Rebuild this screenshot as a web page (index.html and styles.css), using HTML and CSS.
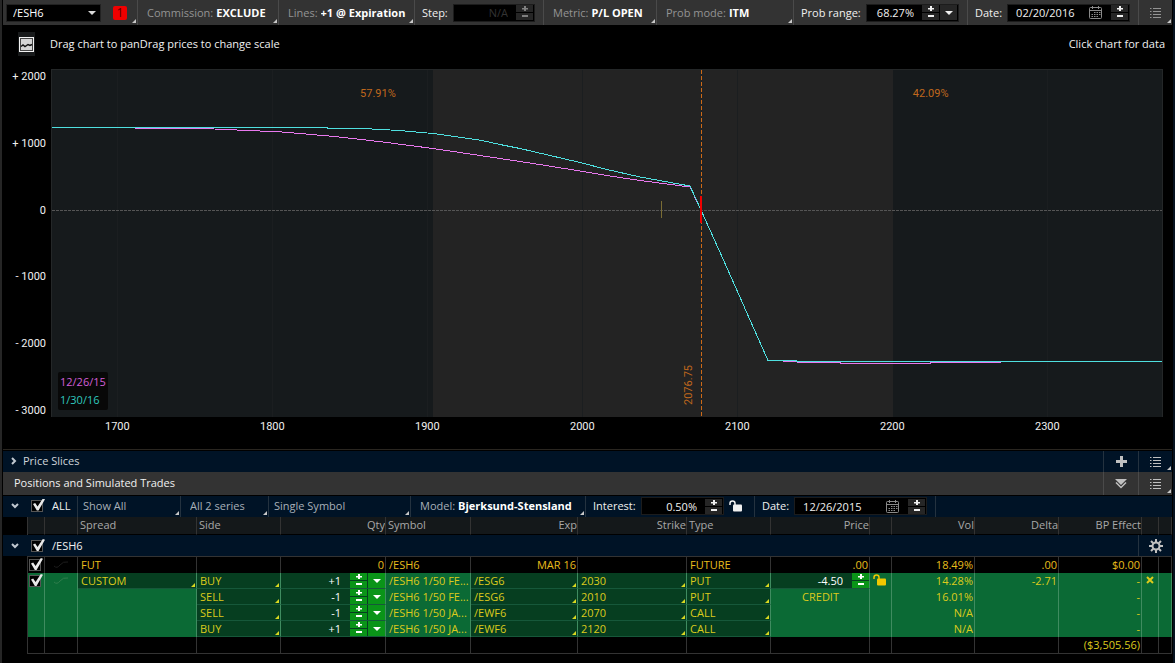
FILE: index.html
```html
<!DOCTYPE html>
<html lang="en">

<head>
    <meta charset="utf-8">
    <meta name="viewport" content="width=device-width, initial-scale=1">
    <title>Risk Profile - /ESH6</title>
    <link rel="stylesheet" href="styles.css">
</head>

<body>
    <svg class="sprite" aria-hidden="true">
        <symbol id="i-plus" viewBox="0 0 6 5"><path d="M2 0h2v5H2zM0 2h6v1.500H0z" /></symbol>
        <symbol id="i-minus" viewBox="0 0 6 5"><path d="M0 1h6v2H0z" /></symbol>
        <symbol id="i-down" viewBox="0 0 8 4"><path d="M0 0h8L4 4z" /></symbol>
        <symbol id="i-list" viewBox="0 0 12 12"><path d="M0 1h1.500v1H0zM3 1h8v1H3zM0 4h1.500v1H0zM3 4h8v1H3zM0 7h1.500v1H0zM3 7h8v1H3zM0 10h1.500v1H0zM3 10h8v1H3z" /></symbol>
        <symbol id="i-calendar" viewBox="0 0 13 13"><path d="M.5 2.500q0-1 1-1h10q1 0 1 1v9q0 1-1 1h-10q-1 0-1-1zM.5 4.500h12M3.500 0v3M9.500 0v3" fill="none" stroke="currentColor" /><path d="M5 6h1.500v1H5zM7.500 6H9v1H7.500zM10 6h1.500v1H10zM2.500 8H4v1H2.500zM5 8h1.500v1H5zM7.500 8H9v1H7.500zM10 8h1.500v1H10zM2.500 10H4v1H2.500zM5 10h1.500v1H5zM7.500 10H9v1H7.500z" /></symbol>
        <symbol id="i-lock" viewBox="0 0 13 12"><path d="M1 5V3.500Q1 1 3.500 1T6 3.500V5" fill="none" stroke="currentColor" stroke-width="1.500" /><rect x="4" y="4.500" width="9" height="7" rx="1" /></symbol>
        <symbol id="i-chevron" viewBox="0 0 8 6"><path d="M1 1l3 3 3-3" fill="none" stroke="currentColor" stroke-width="2" /></symbol>
        <symbol id="i-curve" viewBox="0 0 16 9"><path d="M1 6q3 3 6-1t8-3" fill="none" stroke="currentColor" /></symbol>
        <symbol id="i-close" viewBox="0 0 8 8"><path d="M1 1l6 6M7 1L1 7" fill="none" stroke="currentColor" stroke-width="2" /></symbol>
        <symbol id="i-gear" viewBox="0 0 14 14"><circle cx="7" cy="7" r="3.500" fill="none" stroke="currentColor" stroke-width="2" /><path d="M7 0v3M7 11v3M0 7h3M11 7h3M2 2l2.200 2.200M9.800 9.800L12 12M12 2L9.800 4.200M4.200 9.800L2 12" fill="none" stroke="currentColor" stroke-width="2" /></symbol>
    </svg>

    <header class="toolbar">
        <div class="cell symbol-cell corner">
            <div class="combo">
                <select aria-label="Symbol"><option>/ESH6</option></select>
                <svg class="arrow"><use href="#i-down" /></svg>
            </div>
            <button class="alert" aria-label="Alerts">1</button>
        </div>
        <label class="cell corner">Commission: <select class="value"><option>EXCLUDE</option></select></label>
        <label class="cell corner">Lines: <select class="value"><option>+1 @ Expiration</option></select></label>
        <div class="cell field-cell">
            <label for="step">Step:</label>
            <div class="field disabled">
                <input id="step" type="text" value="N/A" disabled>
                <span class="stepper"><button disabled aria-label="Increase step"><svg><use href="#i-plus" /></svg></button><button disabled aria-label="Decrease step"><svg><use href="#i-minus" /></svg></button></span>
            </div>
        </div>
        <label class="cell corner">Metric: <select class="value"><option>P/L OPEN</option></select></label>
        <label class="cell corner">Prob mode: <select class="value"><option>ITM</option></select></label>
        <div class="cell field-cell">
            <label for="range">Prob range:</label>
            <div class="field">
                <input id="range" type="text" value="68.27%">
                <span class="stepper"><button aria-label="Increase range"><svg><use href="#i-plus" /></svg></button><button aria-label="Decrease range"><svg><use href="#i-minus" /></svg></button></span>
                <button class="drop" aria-label="Range presets"><svg><use href="#i-down" /></svg></button>
            </div>
        </div>
        <div class="cell field-cell">
            <label for="prob-date">Date:</label>
            <div class="field date">
                <input id="prob-date" type="text" value="02/20/2016">
                <button class="calendar" aria-label="Pick date"><svg><use href="#i-calendar" /></svg></button>
                <span class="stepper"><button aria-label="Next day"><svg><use href="#i-plus" /></svg></button><button aria-label="Previous day"><svg><use href="#i-minus" /></svg></button></span>
            </div>
        </div>
        <button class="cell tool corner" aria-label="Menu"><svg class="list"><use href="#i-list" /></svg></button>
    </header>

    <main>
        <section class="chart">
            <div class="hints">
                <svg class="picture" viewBox="0 0 17 24">
                    <rect width="17" height="24" fill="#181a1b" />
                    <rect x="1" y="5" width="15" height="15" fill="#f2f2f2" />
                    <rect x="2.500" y="6.500" width="12" height="12" fill="#d4d4d4" stroke="#444" />
                    <path d="M3 14.500l2-1.500 2 1.500 3-2 2 1 2-1" fill="none" stroke="#111" stroke-width="1.500" />
                </svg>
                <span>Drag chart to panDrag prices to change scale</span>
                <span class="hint-right">Click chart for data</span>
            </div>
            <div class="graph">
                <div class="y-axis">
                    <span>+ 2000</span><span>+ 1000</span><span>0</span><span>- 1000</span><span>- 2000</span><span>- 3000</span>
                </div>
                <div class="plot">
                    <svg class="lines" viewBox="0 0 1112 348" preserveAspectRatio="none">
                        <rect width="1112" height="348" fill="#161a1c" />
                        <rect x="382" width="460" height="348" fill="#232323" />
                        <path class="grid" d="M66.500 0v348M221.500 0v348M376.500 0v348M531.500 0v348M686.500 0v348M996.500 0v348" />
                        <path class="frame" d="M.5 0v348M0 .5h1112M1111.500 0v348" />
                        <path class="zero" d="M1 141.500h1110" />
                        <path class="tick" d="M610.500 132v17" />
                        <path class="spot" d="M650.500 1v346" />
                        <polyline class="today" points="1,58.500 84,58.500 85,59.500 152,59.500 186,61 231,63 284,67.500 332,73 382,79.500 429,86.500 479,94 529,102 559,107 589,111.500 639,118 650,141 672,190 717,291.500 746,292.500 747,293.500 789,293.500 790,294.500 879,294.500 880,293.500 949,293.500 950,292.500 1111,292.500" />
                        <polyline class="expiry" points="1,58.500 276,58.500 277,59.500 309,59.500 332,60.500 354,62 382,64.500 397,66.500 414,69 431,71.500 449,75.500 469,79.500 499,86.500 529,93.500 554,100 589,108 639,117 650,141 672,190 717,291.500 745,291.500 746,292.500 1111,292.500" />
                        <path class="mark" d="M650 127v27" />
                    </svg>
                    <span class="prob prob-left">57.91%</span>
                    <span class="prob prob-right">42.09%</span>
                    <span class="prob spot-label">2076.75</span>
                    <div class="legend"><span class="legend-today">12/26/15</span><span class="legend-expiry">1/30/16</span></div>
                </div>
                <div class="x-axis">
                    <span>1700</span><span>1800</span><span>1900</span><span>2000</span><span>2100</span><span>2200</span><span>2300</span>
                </div>
            </div>
        </section>

        <section class="bar slices">
            <button class="bar-title"><svg class="chevron closed"><use href="#i-chevron" /></svg>Price Slices</button>
            <button class="tool" aria-label="Add slice"><svg class="add" viewBox="0 0 11 11"><path d="M4 0h3v4h4v3H7v4H4V7H0V4h4z" /></svg></button>
            <button class="tool corner" aria-label="Slices menu"><svg class="list"><use href="#i-list" /></svg></button>
        </section>

        <section class="bar positions">
            <h2 class="bar-title">Positions and Simulated Trades</h2>
            <button class="tool" aria-label="Collapse"><svg class="fold" viewBox="0 0 12 10"><path d="M0 0h12L6 6z" /><path d="M1 3.500l5 5 5-5" fill="none" stroke="currentColor" stroke-width="1.500" /></svg></button>
            <button class="tool corner" aria-label="Positions menu"><svg class="list"><use href="#i-list" /></svg></button>
        </section>

        <div class="filters">
            <div class="cell all-cell">
                <button class="toggle" aria-label="Collapse all"><svg class="chevron"><use href="#i-chevron" /></svg></button>
                <label><input type="checkbox" checked>ALL</label>
            </div>
            <div class="cell narrow corner"><select aria-label="Show"><option>Show All</option></select></div>
            <div class="cell corner"><select aria-label="Series"><option>All 2 series</option></select></div>
            <div class="cell narrow corner"><select aria-label="Symbols"><option>Single Symbol</option></select></div>
            <label class="cell corner">Model: <select class="value"><option>Bjerksund-Stensland</option></select></label>
            <div class="cell field-cell">
                <label for="interest">Interest:</label>
                <div class="field">
                    <input id="interest" type="text" value="0.50%">
                    <span class="stepper"><button aria-label="Increase interest"><svg><use href="#i-plus" /></svg></button><button aria-label="Decrease interest"><svg><use href="#i-minus" /></svg></button></span>
                </div>
                <button class="lock" aria-label="Lock interest"><svg><use href="#i-lock" /></svg></button>
            </div>
            <div class="cell field-cell">
                <label for="trade-date">Date:</label>
                <div class="field date">
                    <input id="trade-date" type="text" value="12/26/2015">
                    <button class="calendar" aria-label="Pick date"><svg><use href="#i-calendar" /></svg></button>
                    <span class="stepper"><button aria-label="Next day"><svg><use href="#i-plus" /></svg></button><button aria-label="Previous day"><svg><use href="#i-minus" /></svg></button></span>
                </div>
            </div>
        </div>

        <table class="trades">
            <colgroup>
                <col class="w-toggle"><col class="w-check"><col class="w-curve"><col class="w-spread"><col class="w-side"><col class="w-qty"><col class="w-symbol"><col class="w-exp"><col class="w-strike"><col class="w-type"><col class="w-price"><col class="w-lock"><col class="w-vol"><col class="w-delta"><col class="w-effect"><col class="w-close"><col class="w-end">
            </colgroup>
            <thead>
                <tr>
                    <td class="gutter"></td>
                    <th></th>
                    <th></th>
                    <th>Spread</th>
                    <th>Side</th>
                    <th class="num">Qty</th>
                    <th>Symbol</th>
                    <th class="num">Exp</th>
                    <th class="num">Strike</th>
                    <th>Type</th>
                    <th class="num">Price</th>
                    <th></th>
                    <th class="num">Vol</th>
                    <th class="num">Delta</th>
                    <th class="num">BP Effect</th>
                    <th></th>
                    <th></th>
                </tr>
            </thead>
            <tbody>
                <tr class="group">
                    <td colspan="17">
                        <div class="group-row">
                            <button class="toggle" aria-label="Collapse /ESH6"><svg class="chevron"><use href="#i-chevron" /></svg></button>
                            <label><input type="checkbox" checked>/ESH6</label>
                            <button class="tool" aria-label="Settings"><svg class="gear"><use href="#i-gear" /></svg></button>
                        </div>
                    </td>
                </tr>
                <tr class="future">
                    <td class="gutter"></td>
                    <td class="check"><input type="checkbox" checked aria-label="Include future"></td>
                    <td><svg class="curve"><use href="#i-curve" /></svg></td>
                    <td>FUT</td>
                    <td></td>
                    <td class="num">0</td>
                    <td>/ESH6</td>
                    <td class="num">MAR 16</td>
                    <td></td>
                    <td>FUTURE</td>
                    <td class="num">.00</td>
                    <td></td>
                    <td class="num">18.49%</td>
                    <td class="num">.00</td>
                    <td class="num">$0.00</td>
                    <td></td>
                    <td></td>
                </tr>
                <tr class="leg">
                    <td class="gutter"></td>
                    <td class="check"><input type="checkbox" checked aria-label="Include custom"></td>
                    <td><svg class="curve"><use href="#i-curve" /></svg></td>
                    <td class="edit corner"><select aria-label="Spread"><option>CUSTOM</option></select></td>
                    <td class="edit corner"><select aria-label="Side"><option>BUY</option></select></td>
                    <td class="edit"><div class="amount"><input type="text" value="+1" aria-label="Qty"><span class="stepper"><button aria-label="More"><svg><use href="#i-plus" /></svg></button><button aria-label="Less"><svg><use href="#i-minus" /></svg></button></span><button class="drop" aria-label="Qty presets"><svg><use href="#i-down" /></svg></button></div></td>
                    <td>/ESH6 1/50 FE...</td>
                    <td class="edit corner"><select aria-label="Exp"><option>/ESG6</option></select></td>
                    <td class="edit corner"><select aria-label="Strike"><option>2030</option></select></td>
                    <td class="edit corner"><select aria-label="Type"><option>PUT</option></select></td>
                    <td class="edit"><div class="amount"><input type="text" value="-4.50" aria-label="Price"><span class="stepper"><button aria-label="Raise price"><svg><use href="#i-plus" /></svg></button><button aria-label="Lower price"><svg><use href="#i-minus" /></svg></button></span></div></td>
                    <td><button class="lock" aria-label="Lock price"><svg><use href="#i-lock" /></svg></button></td>
                    <td class="num">14.28%</td>
                    <td class="num">-2.71</td>
                    <td class="num">-</td>
                    <td><button class="close" aria-label="Remove trade"><svg><use href="#i-close" /></svg></button></td>
                    <td></td>
                </tr>
                <tr class="leg">
                    <td class="gutter"></td>
                    <td></td>
                    <td></td>
                    <td></td>
                    <td class="edit corner"><select aria-label="Side"><option>SELL</option></select></td>
                    <td class="edit"><div class="amount"><input type="text" value="-1" aria-label="Qty"><span class="stepper"><button aria-label="More"><svg><use href="#i-plus" /></svg></button><button aria-label="Less"><svg><use href="#i-minus" /></svg></button></span><button class="drop" aria-label="Qty presets"><svg><use href="#i-down" /></svg></button></div></td>
                    <td>/ESH6 1/50 FE...</td>
                    <td class="edit corner"><select aria-label="Exp"><option>/ESG6</option></select></td>
                    <td class="edit corner"><select aria-label="Strike"><option>2010</option></select></td>
                    <td class="edit corner"><select aria-label="Type"><option>PUT</option></select></td>
                    <td class="num credit">CREDIT</td>
                    <td></td>
                    <td class="num">16.01%</td>
                    <td></td>
                    <td class="num">-</td>
                    <td></td>
                    <td></td>
                </tr>
                <tr class="leg">
                    <td class="gutter"></td>
                    <td></td>
                    <td></td>
                    <td></td>
                    <td class="edit corner"><select aria-label="Side"><option>SELL</option></select></td>
                    <td class="edit"><div class="amount"><input type="text" value="-1" aria-label="Qty"><span class="stepper"><button aria-label="More"><svg><use href="#i-plus" /></svg></button><button aria-label="Less"><svg><use href="#i-minus" /></svg></button></span><button class="drop" aria-label="Qty presets"><svg><use href="#i-down" /></svg></button></div></td>
                    <td>/ESH6 1/50 JA...</td>
                    <td class="edit corner"><select aria-label="Exp"><option>/EWF6</option></select></td>
                    <td class="edit corner"><select aria-label="Strike"><option>2070</option></select></td>
                    <td class="edit corner"><select aria-label="Type"><option>CALL</option></select></td>
                    <td></td>
                    <td></td>
                    <td class="num">N/A</td>
                    <td></td>
                    <td class="num">-</td>
                    <td></td>
                    <td></td>
                </tr>
                <tr class="leg">
                    <td class="gutter"></td>
                    <td></td>
                    <td></td>
                    <td></td>
                    <td class="edit corner"><select aria-label="Side"><option>BUY</option></select></td>
                    <td class="edit"><div class="amount"><input type="text" value="+1" aria-label="Qty"><span class="stepper"><button aria-label="More"><svg><use href="#i-plus" /></svg></button><button aria-label="Less"><svg><use href="#i-minus" /></svg></button></span><button class="drop" aria-label="Qty presets"><svg><use href="#i-down" /></svg></button></div></td>
                    <td>/ESH6 1/50 JA...</td>
                    <td class="edit corner"><select aria-label="Exp"><option>/EWF6</option></select></td>
                    <td class="edit corner"><select aria-label="Strike"><option>2120</option></select></td>
                    <td class="edit corner"><select aria-label="Type"><option>CALL</option></select></td>
                    <td></td>
                    <td></td>
                    <td class="num">N/A</td>
                    <td></td>
                    <td class="num">-</td>
                    <td></td>
                    <td></td>
                </tr>
                <tr class="total">
                    <td class="gutter"></td>
                    <td></td>
                    <td></td>
                    <td></td>
                    <td></td>
                    <td></td>
                    <td></td>
                    <td></td>
                    <td></td>
                    <td></td>
                    <td></td>
                    <td></td>
                    <td></td>
                    <td></td>
                    <td class="num">($3,505.56)</td>
                    <td></td>
                    <td></td>
                </tr>
            </tbody>
        </table>
    </main>
</body>

</html>
```

FILE: styles.css
```css
:root {
    --color-panel: #333333;
    --color-navy: #001326;
    --color-head: #14181a;
    --color-border: #4a4a4a;
    --color-text: #f0f0f0;
    --color-muted: #949494;
    --color-leg: #0b6a35;
    --color-edit: #063e20;
    --color-leg-line: #3f8c60;
    --color-yellow: #dccb1c;
    --color-gold: #e8bd1c;
    --color-orange: #c0681c;
    --color-button: #0a9418;
}

* {
    box-sizing: border-box;
}

body {
    margin: 0;
    padding: 0 1px;
    min-height: 100vh;
    background: #000000;
    border-left: 2px solid #262626;
    border-right: 2px solid #06121f;
    color: var(--color-text);
    font-family: "Open Sans", "Noto Sans", sans-serif;
    font-size: 11px;
    line-height: 15px;
}

.sprite {
    display: none;
}

svg {
    display: block;
    fill: currentColor;
}

button,
input,
select {
    margin: 0;
    padding: 0;
    border: none;
    border-radius: 0;
    background: none;
    color: inherit;
    font: inherit;
    appearance: none;
    outline: none;
}

button {
    cursor: pointer;
}

select {
    flex: 1;
    min-width: 0;
}

/* menu marker in the lower right corner */
.corner {
    position: relative;
}

.corner::after {
    content: "";
    position: absolute;
    right: 1px;
    bottom: 2px;
    border-left: 4px solid transparent;
    border-bottom: 4px solid #c8c8c8;
    pointer-events: none;
}

input[type="checkbox"] {
    position: relative;
    width: 12px;
    height: 12px;
    background: #000000;
    border: 1px solid #555555;
}

input[type="checkbox"]:checked::before {
    content: "";
    position: absolute;
    left: 1px;
    top: -2px;
    width: 12px;
    height: 12px;
    background: #e8e8e8;
    clip-path: polygon(0 45%, 18% 38%, 38% 66%, 82% 0, 100% 6%, 46% 100%, 32% 100%);
}

/* top toolbar and filter row */
.toolbar,
.filters {
    display: grid;
}

.toolbar {
    height: 25px;
    background: var(--color-panel);
    grid-template-columns: 135fr 141fr 136fr 129fr 113fr 137fr 174fr 171fr 33fr;
}

.filters {
    height: 21px;
    margin-top: 1px;
    background: var(--color-navy);
    grid-template-columns: 75fr 103fr 88fr 142fr 175fr 169fr 181fr 236fr;
    color: #a8b0b8;
}

.cell {
    display: flex;
    align-items: center;
    gap: 3px;
    min-width: 0;
    padding-left: 9px;
    padding-bottom: 1px;
    border-right: 1px solid var(--color-border);
    white-space: nowrap;
}

.toolbar .cell {
    color: var(--color-muted);
}

.toolbar .cell:last-child {
    border-right: none;
}

.filters .cell {
    padding-bottom: 2px;
    border-color: #24323f;
}

.filters .narrow {
    padding-left: 5px;
}

.cell .value {
    color: #ffffff;
    font-weight: 700;
}

.toolbar .field-cell,
.filters .field-cell {
    gap: 5px;
    padding: 0 8px 1px 7px;
    color: var(--color-text);
}

.toolbar .field-cell,
.toolbar .symbol-cell {
    padding-bottom: 0;
}

.field-cell > label {
    padding-bottom: 1px;
}

.symbol-cell {
    gap: 12px;
    padding: 0 10px 0 3px;
}

.combo {
    display: grid;
    flex: 1;
    height: 18px;
    grid-template-columns: 1fr 17px;
    align-items: center;
    background: #000000;
    border: 1px solid #222222;
    color: #ffffff;
}

.combo select {
    grid-area: 1 / 1 / 2 / 3;
    padding-left: 6px;
}

.combo .arrow {
    grid-area: 1 / 2;
    width: 8px;
    height: 4px;
    margin: auto;
    pointer-events: none;
    color: #d8d8d8;
}

.alert {
    width: 14px;
    height: 14px;
    background: #f00000;
    border-radius: 2px;
    color: #5a0000;
    font-size: 12px;
    line-height: 14px;
}

.field {
    display: flex;
    flex: 1;
    align-items: center;
    gap: 1px;
    min-width: 0;
    height: 18px;
    padding-right: 1px;
    background: #000000;
    border: 1px solid #1c1c1c;
}

.field input {
    flex: 1;
    width: 0;
    min-width: 0;
    padding-right: 7px;
    text-align: right;
}

.field.date input {
    padding-left: 8px;
    text-align: left;
}

.field.disabled input,
.field.disabled .stepper {
    color: #333333;
}

.field.disabled svg {
    color: #808080;
}

.stepper {
    display: grid;
    width: 17px;
    grid-template-rows: 7px 7px;
    gap: 1px;
}

.stepper button,
.drop {
    display: grid;
    place-items: center;
    place-content: center;
    min-height: 0;
    background: #262626;
    line-height: 0;
}

.stepper button {
    width: 17px;
    height: 7px;
}

.stepper svg {
    width: 6px;
    height: 5px;
}

.drop {
    width: 17px;
    height: 15px;
}

.drop svg {
    width: 8px;
    height: 4px;
}

.calendar {
    margin-right: 8px;
    color: #8a8a8a;
}

.calendar svg {
    width: 13px;
    height: 13px;
}

.lock svg {
    width: 13px;
    height: 12px;
}

.field-cell .lock {
    margin-right: 4px;
}

.tool {
    display: grid;
    place-items: center;
    padding: 0;
    color: #c0c0c0;
}

.tool .list {
    width: 12px;
    height: 12px;
}

/* chart */
.chart {
    padding-bottom: 15px;
    border-bottom: 1px solid #2a2620;
}

.hints {
    display: flex;
    align-items: center;
    gap: 15px;
    height: 44px;
    padding: 0 7px 7px 15px;
}

.hint-right {
    margin-left: auto;
}

.picture {
    width: 17px;
    height: 24px;
}

.graph {
    display: grid;
    grid-template-columns: 48px 1fr;
    padding-right: 9px;
    font-family: Roboto, "Noto Sans", sans-serif;
}

.y-axis {
    display: flex;
    flex-direction: column;
    justify-content: space-between;
    padding: 1px 5px 0 0;
    line-height: 13px;
    text-align: right;
}

.plot {
    position: relative;
    height: 348px;
}

.lines {
    width: 100%;
    height: 100%;
}

.lines path,
.lines polyline {
    fill: none;
    vector-effect: non-scaling-stroke;
    shape-rendering: crispEdges;
}

.lines .grid {
    stroke: #1b1e20;
}

.lines .frame {
    stroke: #242728;
}

.lines .zero {
    stroke: #555555;
    stroke-dasharray: 3 1;
}

.lines .tick {
    stroke: #7a6c34;
}

.lines .spot {
    stroke: #cc6a18;
    stroke-dasharray: 4 2;
}

.lines .today {
    stroke: #e878ee;
}

.lines .expiry {
    stroke: #4fe0e0;
}

.lines .mark {
    stroke: #f00000;
    stroke-width: 2;
}

.prob {
    position: absolute;
    color: var(--color-orange);
}

.prob-left {
    top: 5%;
    right: 69%;
}

.prob-right {
    top: 5%;
    left: 77.500%;
}

.spot-label {
    right: 42%;
    bottom: 12px;
    writing-mode: vertical-rl;
    transform: rotate(180deg);
}

.legend {
    position: absolute;
    left: 7px;
    bottom: 7px;
    display: grid;
    padding: 1px 2px;
    background: #080808;
    border-radius: 2px;
    font-family: "Open Sans", sans-serif;
    line-height: 18px;
}

.legend-today {
    color: #d45fd8;
}

.legend-expiry {
    color: #2fc8be;
}

.x-axis {
    display: grid;
    grid-column: 2;
    grid-template-columns: repeat(6, 155fr) 128fr;
    padding: 3px 0 0 54px;
    line-height: 14px;
}

/* section bars */
.bar {
    display: grid;
    grid-template-columns: 1fr 35px 34px;
}

.bar .tool {
    border-left: 1px solid var(--color-border);
}

.bar-title {
    display: flex;
    align-items: center;
    gap: 4px;
    margin: 0;
    padding: 0 0 2px 11px;
    font-size: 11px;
    font-weight: 400;
}

.slices {
    height: 21px;
    margin-top: 1px;
    background: var(--color-navy);
}

.slices .tool {
    border-color: #24323f;
}

.slices .bar-title {
    gap: 5px;
    padding-left: 7px;
    color: #cfd5da;
}

.positions {
    height: 23px;
    background: var(--color-panel);
}

.add {
    width: 11px;
    height: 11px;
}

.fold {
    width: 12px;
    height: 10px;
}

.chevron {
    width: 8px;
    height: 6px;
    color: #c0c8d0;
}

.closed {
    transform: rotate(-90deg);
}

.toggle {
    display: grid;
    width: 16px;
    place-items: center end;
}

.all-cell,
.group-row {
    display: flex;
    align-items: center;
    gap: 12px;
    padding-left: 0;
    color: var(--color-text);
}

.all-cell label,
.group-row label {
    display: flex;
    align-items: center;
    gap: 9px;
}

/* trades table */
.trades {
    width: 100%;
    table-layout: fixed;
    border-spacing: 0;
}

.w-toggle { width: 25px; }
.w-check { width: 17px; }
.w-curve { width: 33px; }
.w-spread { width: 119px; }
.w-side { width: 84px; }
.w-qty { width: 105px; }
.w-symbol { width: 85px; }
.w-exp { width: 107px; }
.w-strike { width: 109px; }
.w-type { width: 84px; }
.w-price { width: 99px; }
.w-lock { width: 22px; }
.w-vol { width: 83px; }
.w-delta { width: 84px; }
.w-effect { width: 83px; }
.w-close { width: 17px; }
.w-end { width: 13px; }

.trades td,
.trades th {
    height: 16px;
    padding: 0 1px 0 3px;
    border-right: 1px solid #333333;
    font-weight: 400;
    line-height: 15px;
    text-align: left;
    vertical-align: top;
    white-space: nowrap;
    overflow: hidden;
}

.trades th {
    height: 18px;
    padding: 0 0 0 2px;
    background: var(--color-head);
    color: #a8a8a8;
    border-bottom: 1px solid #000000;
}

.trades .gutter {
    background: #000000;
    border-bottom: none;
}

.trades .num {
    text-align: right;
}

.trades .check,
.trades td:nth-child(16) {
    padding: 0 1px;
}

.trades .group td {
    height: 21px;
    padding: 0;
    background: var(--color-navy);
    border-right: none;
}

.group-row {
    height: 21px;
}

.group-row label {
    padding-bottom: 1px;
}

.group-row .tool {
    width: 34px;
    height: 21px;
    margin-left: auto;
    border-left: 1px solid #24323f;
}

.gear {
    width: 14px;
    height: 14px;
}

.future {
    color: var(--color-gold);
}

.trades .future td {
    height: 17px;
    border-top: 1px solid #333333;
}

.trades .future .gutter {
    border-top: none;
}

.leg {
    color: var(--color-yellow);
}

.trades .leg td {
    background: var(--color-leg);
    border-color: var(--color-leg-line);
}

.trades .leg .edit {
    background: var(--color-edit);
    border-bottom: 1px solid #16583a;
}

.trades .leg .gutter {
    background: #000000;
    border-color: #333333;
}

.leg .corner::after {
    bottom: 1px;
    border-bottom-color: #d8d820;
}

.trades td input[type="checkbox"] {
    display: block;
    margin-top: 2px;
}

.curve {
    width: 16px;
    height: 9px;
    margin: 3px 0 0 5px;
    color: #1d1d1d;
}

.leg .curve {
    color: #2f7d4c;
}

.leg select {
    display: block;
    width: 100%;
    height: 15px;
}

.trades .leg td:nth-child(6),
.trades .leg td:nth-child(11) {
    padding-right: 0;
}

.trades .leg td.credit {
    padding-right: 30px;
}

.amount {
    display: flex;
    gap: 1px;
    height: 15px;
    color: #ffffff;
}

.amount input {
    flex: 1;
    width: 0;
    min-width: 0;
    padding-right: 8px;
    text-align: right;
}

.amount .stepper button,
.amount .drop {
    background: var(--color-button);
}

.leg .lock {
    display: block;
    margin-top: 1px;
    color: #f0c800;
}

.close {
    display: block;
    margin: 3px auto 0;
}

.close svg {
    width: 8px;
    height: 8px;
}

.total {
    color: var(--color-yellow);
}

.trades .total td {
    height: 17px;
    border-bottom: 1px solid #333333;
}

.trades .total .gutter {
    border-bottom: none;
}
```
